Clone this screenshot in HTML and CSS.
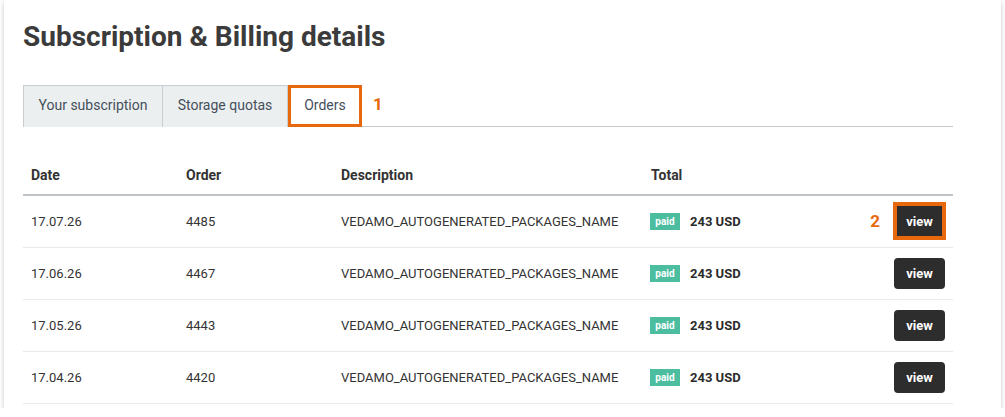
FILE: index.html
```html
<!DOCTYPE html>
<html>
<head>
<meta charset="utf-8">
<link rel="stylesheet" href="styles.css">
</head>
<body>
<div class="card">
  <h1 class="title">Subscription &amp; Billing details</h1>
  <div class="tabs">
    <div class="tab">Your subscription</div>
    <div class="tab">Storage quotas</div>
    <div class="tab active">Orders</div>
    <span class="mark mark-tab">1</span>
  </div>
  <table class="orders">
    <thead>
      <tr><th class="c-date">Date</th><th class="c-order">Order</th><th class="c-desc">Description</th><th class="c-total">Total</th><th class="c-act"></th></tr>
    </thead>
    <tbody>
      <tr><td>17.07.26</td><td>4485</td><td>VEDAMO_AUTOGENERATED_PACKAGES_NAME</td><td><span class="badge">paid</span><span class="amount">243 USD</span></td><td class="act"><span class="mark mark-btn">2</span><button class="view hl">view</button></td></tr>
      <tr><td>17.06.26</td><td>4467</td><td>VEDAMO_AUTOGENERATED_PACKAGES_NAME</td><td><span class="badge">paid</span><span class="amount">243 USD</span></td><td class="act"><button class="view">view</button></td></tr>
      <tr><td>17.05.26</td><td>4443</td><td>VEDAMO_AUTOGENERATED_PACKAGES_NAME</td><td><span class="badge">paid</span><span class="amount">243 USD</span></td><td class="act"><button class="view">view</button></td></tr>
      <tr><td>17.04.26</td><td>4420</td><td>VEDAMO_AUTOGENERATED_PACKAGES_NAME</td><td><span class="badge">paid</span><span class="amount">243 USD</span></td><td class="act"><button class="view">view</button></td></tr>
    </tbody>
  </table>
</div>
</body>
</html>
```
FILE: styles.css
```css
html, body {
  margin: 0;
  padding: 0;
  background: #ffffff;
  font-family: Roboto, "Liberation Sans", Arial, sans-serif;
  color: #333333;
}
.card {
  margin-left: 4px;
  width: 997px;
  height: 408px;
  box-sizing: border-box;
  padding: 20px 0 0 19px;
  background: #ffffff;
  box-shadow: 0 2px 5px rgba(0,0,0,0.22);
  overflow: hidden;
}
.title {
  margin: 0;
  font-size: 28px;
  line-height: 33px;
  font-weight: 700;
  color: #3b3b3b;
}
.tabs {
  margin-top: 32px;
  width: 930px;
  display: flex;
  align-items: stretch;
  border-bottom: 1px solid #c5c9cc;
  height: 41px;
}
.tab {
  box-sizing: border-box;
  display: flex;
  align-items: center;
  justify-content: center;
  height: 42px;
  padding: 0 0 3px;
  white-space: nowrap;
  font-size: 14px;
  color: #454f5b;
  background: #eceff0;
  border: 1px solid #c9cdd0;
  border-right: none;
  border-bottom: none;
}
.tab:first-child { width: 139px; }
.tab:nth-child(2) { width: 126px; border-right: 1px solid #c9cdd0; }
.tab.active {
  width: 74px;
  background: #ffffff;
  border: 3px solid #e8690c;
  color: #454f5b;
}
.mark {
  color: #e8690c;
  font-weight: 700;
  font-size: 17px;
}
.mark-tab {
  align-self: center;
  margin-left: 11px;
  margin-top: -3px;
}
.orders {
  margin-top: 24px;
  width: 930px;
  border-collapse: collapse;
  table-layout: fixed;
  font-size: 13px;
}
.orders th, .orders td {
  box-sizing: border-box;
}
.orders th {
  height: 44px;
  padding: 4px 0 0 8px;
  text-align: left;
  font-size: 14px;
  font-weight: 700;
  color: #333333;
  border-bottom: 2px solid #c0c4c8;
  vertical-align: middle;
}
.c-date, .c-order { width: 155px; }
.c-desc { width: 310px; }
.c-total { width: 150px; }
.orders td {
  height: 52px;
  padding: 0 0 0 8px;
  border-bottom: 1px solid #e9e9e9;
  vertical-align: middle;
  color: #333333;
  white-space: nowrap;
}
.badge {
  display: inline-block;
  width: 30px;
  height: 17px;
  line-height: 17px;
  background: #4dbd9f;
  color: #ffffff;
  font-size: 10px;
  font-weight: 700;
  text-align: center;
  vertical-align: middle;
  margin-left: -1px;
}
.amount {
  margin-left: 10px;
  font-weight: 700;
  vertical-align: middle;
  color: #2b2b2b;
}
.orders td.act {
  text-align: right;
  padding-right: 8px;
}
.view {
  width: 51px;
  height: 31px;
  border: none;
  border-radius: 4px;
  background: #2d2d2d;
  color: #ffffff;
  font-family: Roboto, "Liberation Sans", Arial, sans-serif;
  font-size: 13px;
  font-weight: 700;
  vertical-align: middle;
  cursor: pointer;
}
.view.hl {
  width: 53px;
  height: 38px;
  border: 4px solid #e8690c;
  border-radius: 0;
  margin-right: -1px;
}
.mark-btn {
  margin-right: 13px;
  vertical-align: middle;
}
```
